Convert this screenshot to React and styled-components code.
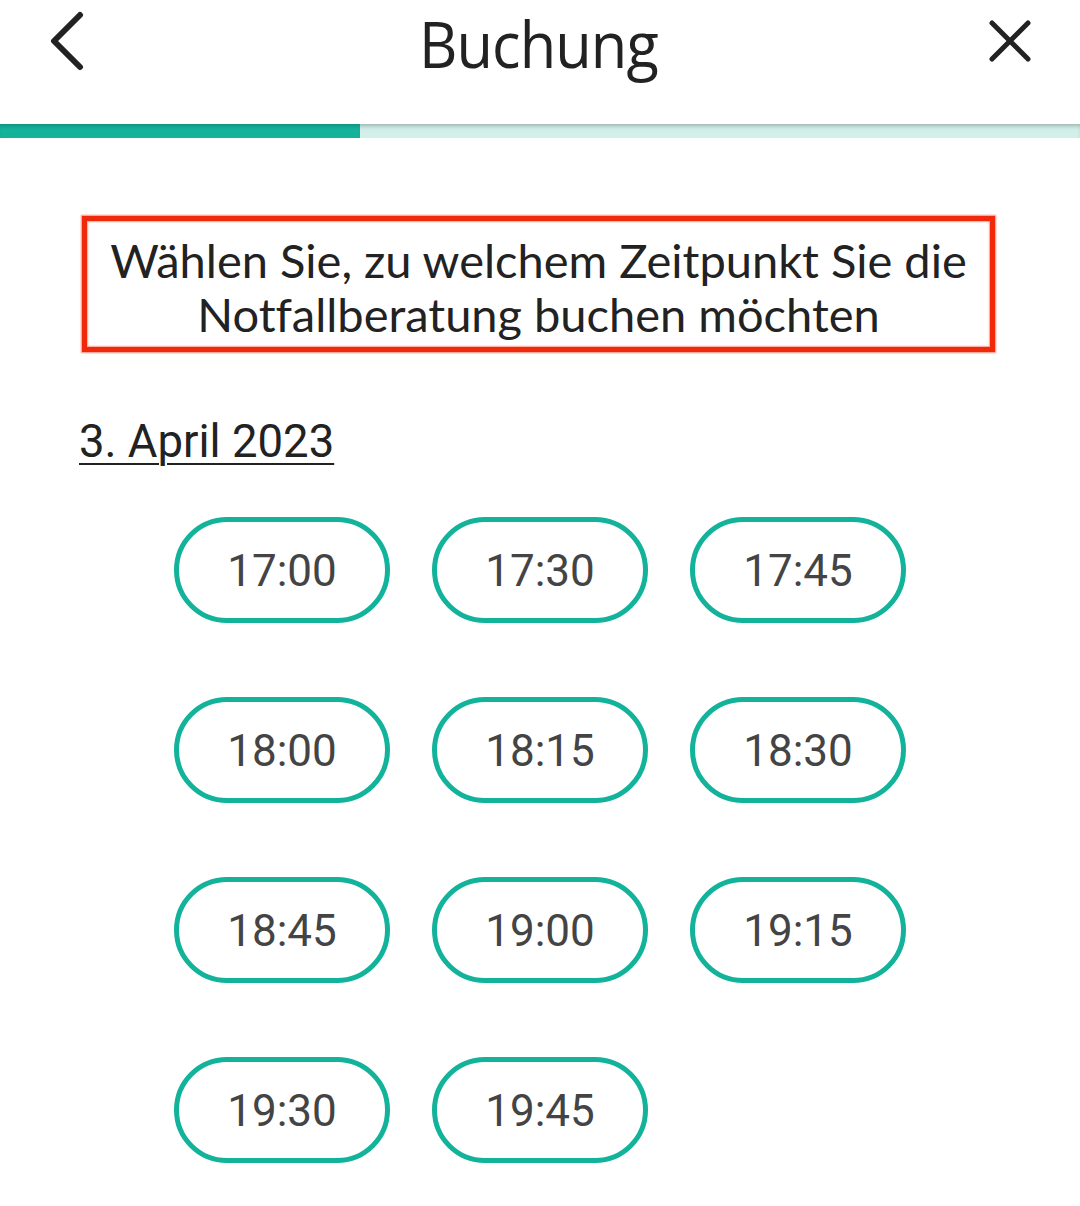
import React from "react";
import styled, { createGlobalStyle } from "styled-components";

const times = [
  "17:00", "17:30", "17:45",
  "18:00", "18:15", "18:30",
  "18:45", "19:00", "19:15",
  "19:30", "19:45",
];

export default function App() {
  return (
    <>
      <GlobalStyle />
      <Page>
        <Header>
          <IconButton aria-label="zurück">
            <svg width="40" height="60" viewBox="0 0 40 60">
              <path d="M34 4 L8 30 L34 56" fill="none" stroke="#222" strokeWidth="6" strokeLinecap="round" strokeLinejoin="round" />
            </svg>
          </IconButton>
          <Title>Buchung</Title>
          <IconButton aria-label="schließen">
            <svg width="44" height="44" viewBox="0 0 44 44">
              <path d="M4 4 L40 40 M40 4 L4 40" fill="none" stroke="#222" strokeWidth="5" strokeLinecap="round" />
            </svg>
          </IconButton>
        </Header>
        <Progress>
          <ProgressFill style={{ width: "33.33%" }} />
        </Progress>
        <Content>
          <Notice>
            Wählen Sie, zu welchem Zeitpunkt Sie die
            <br />
            Notfallberatung buchen möchten
          </Notice>
          <DateLabel>3. April 2023</DateLabel>
          <SlotGrid>
            {times.map((t) => (
              <Slot key={t}>{t}</Slot>
            ))}
          </SlotGrid>
        </Content>
      </Page>
    </>
  );
}

const GlobalStyle = createGlobalStyle`
  html, body {
    margin: 0;
    padding: 0;
    background: #fff;
  }
  body {
    font-family: "Lato", "Noto Sans", sans-serif;
    color: #222;
  }
`;

const Page = styled.div`
  width: 1080px;
  min-height: 1206px;
  background: #fff;
`;

const Header = styled.div`
  height: 124px;
  display: flex;
  align-items: flex-start;
  justify-content: space-between;
  padding: 0 44px 0 40px;
  box-sizing: border-box;
`;

const IconButton = styled.button`
  border: none;
  background: none;
  padding: 0;
  margin-top: 10px;
  width: 52px;
  height: 62px;
  display: flex;
  align-items: center;
  justify-content: center;
`;

const Title = styled.h1`
  margin: 4px 0 0;
  font-family: "Open Sans", sans-serif;
  font-weight: 400;
  font-size: 64px;
  line-height: 80px;
  color: #222;
  letter-spacing: -1px;
  transform: scaleX(0.93);
`;

const Progress = styled.div`
  height: 14px;
  background: #d2efe9;
  box-shadow: inset 0 4px 4px -2px rgba(0, 0, 0, 0.25);
`;

const ProgressFill = styled.div`
  height: 100%;
  background: #13b39b;
  box-shadow: inset 0 4px 4px -2px rgba(0, 0, 0, 0.2);
`;

const Content = styled.div`
  padding: 78px 0 40px;
`;

const Notice = styled.div`
  margin: 0 85px 0 82px;
  border: 5px solid #f0290b;
  box-shadow: 0 0 1.5px 1px rgba(240, 41, 11, 0.55), inset 0 0 1.5px 1px rgba(240, 41, 11, 0.45);
  padding: 12px 6px 10px;
  font-family: "Lato", sans-serif;
  font-size: 47px;
  line-height: 54px;
  text-align: center;
  color: #222;
  height: 136px;
  box-sizing: border-box;
  white-space: nowrap;
  font-variant-ligatures: none;
`;

const DateLabel = styled.div`
  margin: 62px 0 0 79px;
  font-family: "Roboto", sans-serif;
  font-size: 45.5px;
  line-height: 56px;
  text-decoration: underline;
  text-underline-offset: 6px;
  text-decoration-thickness: 2px;
  color: #222;
`;

const SlotGrid = styled.div`
  margin: 47px auto 0;
  display: grid;
  grid-template-columns: repeat(3, 216px);
  column-gap: 42px;
  row-gap: 74px;
  justify-content: center;
`;

const Slot = styled.button`
  height: 106px;
  border: 5px solid #12b39a;
  border-radius: 53px;
  background: #fff;
  font-family: "Roboto", sans-serif;
  font-size: 44px;
  color: #444;
  box-sizing: border-box;
  padding: 2px 0 0;
`;
